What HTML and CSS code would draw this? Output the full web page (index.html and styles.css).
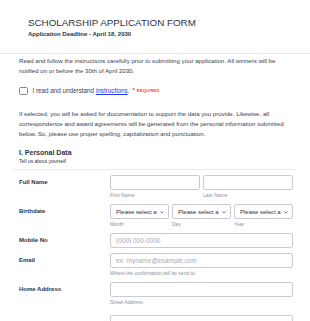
FILE: index.html
```html
<!DOCTYPE html>
<html lang="en">
<head>
<meta charset="utf-8">
<title>Scholarship Application Form</title>
<link rel="stylesheet" href="styles.css">
</head>
<body>
<header class="form-header">
  <h1 class="form-title">SCHOLARSHIP APPLICATION FORM</h1>
  <p class="form-subtitle">Application Deadline - April 18, 2030</p>
</header>

<section class="intro">
  <p class="intro-text">Read and follow the instructions carefully prior to submitting your application. All winners will be notified on or before the 30th of April 2030.</p>
  <label class="agree">
    <span class="checkbox"></span>
    <span class="agree-text">I read and understand <a href="#" class="link">instructions</a>.</span>
    <span class="req-star">*</span>
    <span class="req-text">REQUIRED</span>
  </label>
  <p class="intro-text">If selected, you will be asked for documentation to support the data you provide. Likewise, all correspondence and award agreements will be generated from the personal information submitted below. So, please use proper spelling, capitalization and punctuation.</p>
</section>

<section class="section">
  <div class="section-head">
    <h2 class="section-title">I. Personal Data</h2>
    <p class="section-sub">Tell us about yourself</p>
  </div>

  <div class="row">
    <div class="row-label">Full Name</div>
    <div class="row-fields cols-2">
      <div class="field"><input class="input" type="text"><span class="sublabel">First Name</span></div>
      <div class="field"><input class="input" type="text"><span class="sublabel">Last Name</span></div>
    </div>
  </div>

  <div class="row">
    <div class="row-label">Birthdate</div>
    <div class="row-fields cols-3">
      <div class="field">
        <div class="select"><span class="select-text">Please select a</span><svg class="chev" viewBox="0 0 8 5"><path d="M1 1l3 3 3-3"/></svg></div>
        <span class="sublabel">Month</span>
      </div>
      <div class="field">
        <div class="select"><span class="select-text">Please select a</span><svg class="chev" viewBox="0 0 8 5"><path d="M1 1l3 3 3-3"/></svg></div>
        <span class="sublabel">Day</span>
      </div>
      <div class="field">
        <div class="select"><span class="select-text">Please select a</span><svg class="chev" viewBox="0 0 8 5"><path d="M1 1l3 3 3-3"/></svg></div>
        <span class="sublabel">Year</span>
      </div>
    </div>
  </div>

  <div class="row">
    <div class="row-label">Mobile No</div>
    <div class="row-fields">
      <input class="input" type="tel" placeholder="(000) 000-0000">
    </div>
  </div>

  <div class="row">
    <div class="row-label">Email</div>
    <div class="row-fields">
      <div class="field"><input class="input" type="email" placeholder="ex: myname@example.com"><span class="sublabel">Where the confirmation will be send to</span></div>
    </div>
  </div>

  <div class="row">
    <div class="row-label">Home Address</div>
    <div class="row-fields">
      <div class="field"><input class="input" type="text"><span class="sublabel">Street Address</span></div>
      <div class="field field-next"><input class="input" type="text"></div>
    </div>
  </div>
</section>
</body>
</html>
```

FILE: styles.css
```css
* {
  box-sizing: border-box;
}

html, body {
  background: #ffffff;
}

body {
  margin: 0;
  font-family: "Liberation Sans", Arial, sans-serif;
  color: #2c3345;
}

.form-header {
  padding: 16.5px 28px 15px;
  border-bottom: 1px solid #e6e8ee;
}

.form-title {
  margin: 0 0 1px;
  font-size: 9.8px;
  line-height: 12px;
  font-weight: 400;
  color: #2c3345;
}

.form-subtitle {
  margin: 0;
  font-size: 6px;
  line-height: 8px;
  font-weight: 700;
  color: #2c3345;
}

.intro {
  padding: 2px 19px 0;
}

.intro-text {
  margin: 0;
  font-size: 6.1px;
  line-height: 10px;
  color: #3b4252;
}

.agree {
  display: flex;
  align-items: center;
  height: 10px;
  margin: 10px 0 13.5px;
  font-size: 6.3px;
  color: #3b4252;
}

.checkbox {
  flex: none;
  width: 9px;
  height: 8px;
  border: 1px solid #7f8798;
  border-radius: 1.5px;
  margin-right: 4.5px;
}

.link {
  color: #2336e6;
  text-decoration: underline;
}

.req-star {
  color: #f23a3c;
  font-size: 6px;
  font-weight: 700;
  margin-left: 3px;
  position: relative;
  top: -1px;
}

.req-text {
  color: #f23a3c;
  font-size: 4px;
  font-weight: 700;
  margin-left: 2px;
  letter-spacing: 0.2px;
}

.section {
  margin: 0 14px;
}

.section-head {
  padding: 9.3px 5px 4.7px;
  border-bottom: 1px solid #eaebf0;
}

.section-title {
  margin: 0;
  font-size: 7px;
  line-height: 9px;
  font-weight: 700;
  color: #2c3345;
}

.section-sub {
  margin: 0.5px 0 0;
  font-size: 5px;
  line-height: 7px;
  color: #2c3345;
}

.row {
  display: flex;
  padding: 5px 3px 0 5px;
}

.row-label {
  flex: none;
  width: 91px;
  font-size: 6px;
  line-height: 15px;
  font-weight: 700;
  color: #2c3345;
}

.row-fields {
  flex: 1;
  min-width: 0;
}

.cols-2 {
  display: grid;
  grid-template-columns: 1fr 1fr;
  column-gap: 3px;
}

.cols-3 {
  display: grid;
  grid-template-columns: 1fr 1fr 1fr;
  column-gap: 3px;
}

.field {
  display: flex;
  flex-direction: column;
  min-width: 0;
}

.field-next {
  margin-top: 9px;
}

.input {
  display: block;
  width: 100%;
  height: 15px;
  margin: 0;
  padding: 0 5px;
  border: 1px solid #c6cbd6;
  border-radius: 2px;
  background: #fff;
  font-family: "Liberation Sans", Arial, sans-serif;
  font-size: 6.5px;
  color: #2c3345;
  outline: none;
}

.input::placeholder {
  color: #a5abb7;
}

.select {
  display: flex;
  align-items: center;
  justify-content: space-between;
  height: 15px;
  padding: 0 4px 0 5px;
  border: 1px solid #c6cbd6;
  border-radius: 2px;
  background: #fff;
  font-size: 6px;
  color: #2c3345;
}

.select-text {
  white-space: nowrap;
}

.chev {
  flex: none;
  width: 4px;
  height: 2.5px;
  margin-left: 2px;
}

.chev path {
  fill: none;
  stroke: #2c3345;
  stroke-width: 1.3;
}

.sublabel {
  display: block;
  margin-top: 2px;
  font-size: 5px;
  line-height: 7px;
  color: #8a919f;
  white-space: nowrap;
}
```
